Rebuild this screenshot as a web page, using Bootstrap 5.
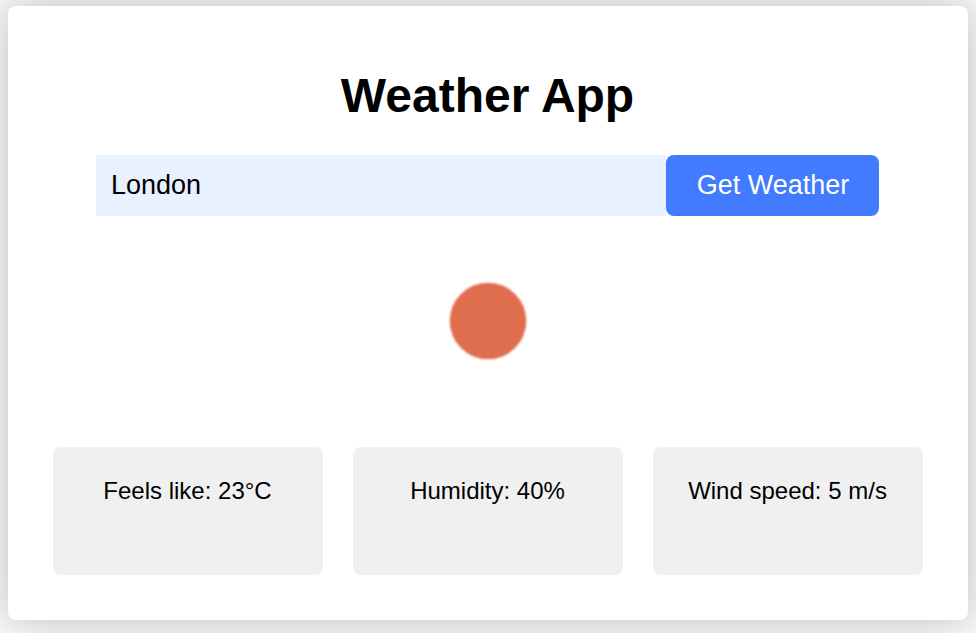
<!DOCTYPE html>
<html lang="en">
<head>
<meta charset="utf-8">
<meta name="viewport" content="width=device-width, initial-scale=1">
<title>Weather App</title>
<link href="https://cdn.jsdelivr.net/npm/bootstrap@5.3.0/dist/css/bootstrap.min.css" rel="stylesheet">
<style>
body{font-family:"Liberation Sans",Arial,sans-serif;background:#f8f8f8;color:#000;padding:6px 8px 0;height:633px;overflow:hidden}
.weather-panel{height:614px;border-radius:8px;padding:61px 45px 0;box-shadow:0 0 38px rgba(0,0,0,.23)}
.app-title{font-size:48px;line-height:58px;margin-bottom:30px;padding-right:1px}
.search-row{height:61px;width:783px;margin-left:43px}
.city-input,.city-input:focus{background:#e9f0ff;color:#000;font-size:27px;padding:0 15px;border:0;border-radius:0;box-shadow:none}
.go-btn{--bs-btn-bg:#427bff;--bs-btn-hover-bg:#366be6;width:213px;font-size:27px;border:0;border-radius:8px;padding:0 0 0 1px}
.sky-icon{height:150px;margin-top:30px}
.sky-icon circle{filter:blur(.8px)}
.stat-grid{gap:30px;margin-top:51px}
.stat-tile{height:128px;border-radius:8px;background:#f0f0f0;font-size:24px;line-height:28px;padding:30px 1px 0 0;flex:1 1 0}
</style>
</head>
<body>
<main class="weather-panel bg-white">
<h1 class="app-title text-center fw-bold">Weather App</h1>
<form class="search-row d-flex">
<input class="form-control city-input flex-fill" type="text" value="London" aria-label="City">
<button class="btn btn-primary go-btn flex-shrink-0" type="button">Get Weather</button>
</form>
<div class="sky-icon d-flex justify-content-center">
<svg width="150" height="150" viewBox="0 0 150 150" role="img" aria-label="Clear sky"><circle cx="75" cy="75" r="38.3" fill="#df6e4f"/></svg>
</div>
<div class="stat-grid d-flex text-center">
<div class="stat-tile">Feels like: 23°C</div>
<div class="stat-tile">Humidity: 40%</div>
<div class="stat-tile">Wind speed: 5 m/s</div>
</div>
</main>
<script src="https://cdn.jsdelivr.net/npm/bootstrap@5.3.0/dist/js/bootstrap.bundle.min.js"></script>
</body>
</html>
